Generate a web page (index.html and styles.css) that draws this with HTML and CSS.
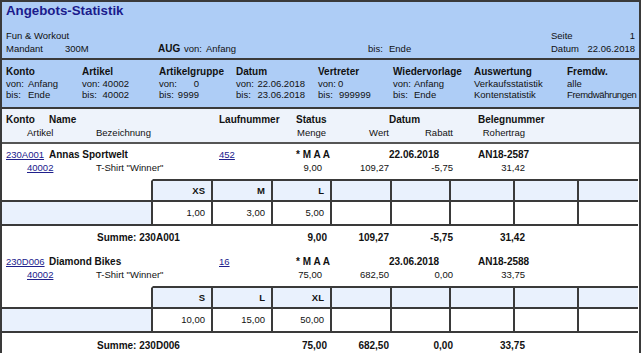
FILE: index.html
```html
<!DOCTYPE html>
<html lang="de">
<head>
<meta charset="utf-8">
<title>Angebots-Statistik</title>
<link rel="stylesheet" href="styles.css">
</head>
<body>
<div class="frame">
  <header class="head">
    <h1 class="title">Angebots-Statistik</h1>
    <div class="head-row">
      <span class="grow">Fun &amp; Workout</span>
      <span class="pageinfo"><span>Seite</span><span>1</span></span>
    </div>
    <div class="head-row">
      <span class="w-mandant">Mandant</span>
      <span class="w-mval">300M</span>
      <b class="w-aug">AUG</b>
      <span class="w-von"><span class="lbl22">von:</span>Anfang</span>
      <span class="grow"><span class="lbl21">bis:</span>Ende</span>
      <span class="pageinfo"><span>Datum</span><span>22.06.2018</span></span>
    </div>
  </header>

  <section class="filters">
    <div class="filter">
      <b>Konto</b>
      <div class="kv"><span class="lbl22">von:</span>Anfang</div>
      <div class="kv"><span class="lbl22">bis:</span>Ende</div>
    </div>
    <div class="filter">
      <b>Artikel</b>
      <div class="kv num w47"><span>von:</span><span>40002</span></div>
      <div class="kv num w47"><span>bis:</span><span>40002</span></div>
    </div>
    <div class="filter">
      <b>Artikelgruppe</b>
      <div class="kv num w40"><span>von:</span><span>0</span></div>
      <div class="kv num w40"><span>bis:</span><span>9999</span></div>
    </div>
    <div class="filter">
      <b>Datum</b>
      <div class="kv num w69"><span>von:</span><span>22.06.2018</span></div>
      <div class="kv num w69"><span>bis:</span><span>23.06.2018</span></div>
    </div>
    <div class="filter">
      <b>Vertreter</b>
      <div class="kv"><span class="lbl20">von:</span>0</div>
      <div class="kv"><span class="lbl21">bis:</span>999999</div>
    </div>
    <div class="filter">
      <b>Wiedervorlage</b>
      <div class="kv"><span class="lbl21">von:</span>Anfang</div>
      <div class="kv"><span class="lbl21">bis:</span>Ende</div>
    </div>
    <div class="filter">
      <b>Auswertung</b>
      <div class="kv">Verkaufsstatistik</div>
      <div class="kv">Kontenstatistik</div>
    </div>
    <div class="filter">
      <b>Fremdw.</b>
      <div class="kv">alle</div>
      <div class="kv tight">Fremdwährungen</div>
    </div>
  </section>

  <section class="colhead">
    <div class="line-a bold">
      <span>Konto</span><span>Name</span><span>Laufnummer</span><span>Status</span><span>Datum</span><span>Belegnummer</span>
    </div>
    <div class="line-b">
      <span>Artikel</span><span>Bezeichnung</span><span>Menge</span><span class="r">Wert</span><span class="r">Rabatt</span><span class="r">Rohertrag</span>
    </div>
  </section>

  <section class="block">
    <div class="line-a">
      <a href="#">230A001</a><b>Annas Sportwelt</b><a href="#">452</a><b>* M A A</b><b>22.06.2018</b><b>AN18-2587</b>
    </div>
    <div class="line-b">
      <a href="#">40002</a><span>T-Shirt "Winner"</span><span class="r menge">9,00</span><span class="r">109,27</span><span class="r">-5,75</span><span class="r">31,42</span>
    </div>
    <div class="sizes">
      <div class="h blank"></div><div class="h">XS</div><div class="h">M</div><div class="h">L</div><div class="h"></div><div class="h"></div><div class="h"></div><div class="h"></div><div class="h last"></div>
      <div class="v tint"></div><div class="v">1,00</div><div class="v">3,00</div><div class="v">5,00</div><div class="v"></div><div class="v"></div><div class="v"></div><div class="v"></div><div class="v last"></div>
    </div>
    <div class="line-b sum">
      <span></span><span class="sumlabel">Summe: 230A001</span><span class="r">9,00</span><span class="r">109,27</span><span class="r">-5,75</span><span class="r">31,42</span>
    </div>
  </section>

  <section class="block">
    <div class="line-a">
      <a href="#">230D006</a><b>Diamond Bikes</b><a href="#">16</a><b>* M A A</b><b>23.06.2018</b><b>AN18-2588</b>
    </div>
    <div class="line-b">
      <a href="#">40002</a><span>T-Shirt "Winner"</span><span class="r menge">75,00</span><span class="r">682,50</span><span class="r">0,00</span><span class="r">33,75</span>
    </div>
    <div class="sizes">
      <div class="h blank"></div><div class="h">S</div><div class="h">L</div><div class="h">XL</div><div class="h"></div><div class="h"></div><div class="h"></div><div class="h"></div><div class="h last"></div>
      <div class="v tint"></div><div class="v">10,00</div><div class="v">15,00</div><div class="v">50,00</div><div class="v"></div><div class="v"></div><div class="v"></div><div class="v"></div><div class="v last"></div>
    </div>
    <div class="line-b sum">
      <span></span><span class="sumlabel">Summe: 230D006</span><span class="r">75,00</span><span class="r">682,50</span><span class="r">0,00</span><span class="r">33,75</span>
    </div>
  </section>
</div>
</body>
</html>
```

FILE: styles.css
```css
* { box-sizing: border-box; margin: 0; padding: 0; }

html, body { height: 100%; }

body {
  font-family: "Liberation Sans", Arial, sans-serif;
  font-size: 9.5px;
  color: #111;
  background: #fff;
  overflow: hidden;
}

b, .bold { font-weight: bold; font-size: 10px; }

a { color: #20208c; text-decoration: underline; }

.frame {
  width: 641px;
  min-height: 380px;
  border: 2px solid #3a3a3a;
  border-bottom: none;
}

/* ---------- top header ---------- */
.head {
  height: 58px;
  background: #aecdf6;
  border-bottom: 2px solid #3a3a3a;
  padding: 1px 4px 0 4px;
}

.title {
  font-size: 13.3px;
  line-height: 16px;
  font-weight: bold;
  color: #1b1b8c;
  margin-bottom: 9.5px;
}

.head-row {
  display: flex;
  line-height: 13px;
}

.grow { flex: 1; }

.pageinfo {
  width: 84px;
  display: flex;
  justify-content: space-between;
}

.w-mandant { width: 59px; }
.w-mval { width: 93px; }
.w-aug { width: 26px; font-size: 10px; }
.w-von { width: 184px; }

.lbl22 { display: inline-block; width: 22px; }
.lbl21 { display: inline-block; width: 21px; }
.lbl20 { display: inline-block; width: 20px; }

/* ---------- filters ---------- */
.filters {
  height: 49px;
  background: #aecdf6;
  border-bottom: 2px solid #3a3a3a;
  padding: 6px 0 0 4px;
  display: grid;
  grid-template-columns: 76px 77px 77px 82px 75px 81px 93px 1fr;
  line-height: 11.5px;
}

.filter b { display: block; }

.kv { white-space: nowrap; }
.kv.num { display: flex; justify-content: space-between; }
.kv.tight { letter-spacing: -0.35px; }
.w47 { width: 47px; }
.w40 { width: 40px; }
.w69 { width: 69px; }

/* ---------- column headers ---------- */
.colhead {
  height: 35px;
  background: #eef3fb;
  border-bottom: 2px solid #555;
  padding-top: 3.5px;
}

.line-a {
  display: grid;
  grid-template-columns: 43px 170px 77px 93px 89px 1fr;
  padding-left: 4px;
  line-height: 13px;
  white-space: nowrap;
}

.line-b {
  display: grid;
  grid-template-columns: 69px 201px 30px 62px 64px 72px 1fr;
  padding-left: 25px;
  line-height: 13px;
  white-space: nowrap;
}

.r { text-align: right; }
.menge { padding-right: 5px; }

/* ---------- data blocks ---------- */
.block { padding-top: 3.5px; }

.sizes {
  margin-top: 5px;
  display: grid;
  grid-template-columns: 151px 60px 60px 59px 60px 59px 64px 64px 59px;
}

.sizes .h,
.sizes .v {
  border-right: 2px solid #3a3a3a;
  border-bottom: 2px solid #3a3a3a;
  text-align: right;
  padding-right: 6px;
  font-size: 9.5px;
}

.sizes .h {
  height: 23px;
  line-height: 19px;
  border-top: 2px solid #3a3a3a;
  background: #e9f1fd;
  font-weight: bold;
}

.sizes .h.blank {
  background: #fff;
  border-top-color: transparent;
}

.sizes .v {
  height: 24px;
  line-height: 22px;
  background: #fff;
}

.sizes .v.tint { background: #e9f1fd; }

.sizes .last { border-right: none; }

.sum {
  padding-top: 5.5px;
  padding-bottom: 7.5px;
  font-weight: bold;
  font-size: 10px;
}

.sumlabel { padding-left: 1px; }
```
